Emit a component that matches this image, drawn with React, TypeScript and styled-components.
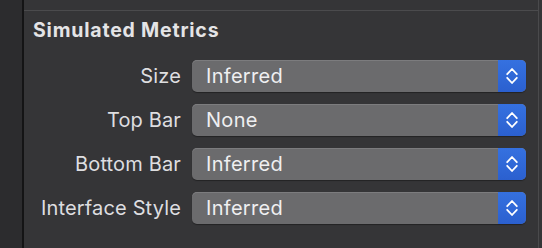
import React from 'react';
import styled, { createGlobalStyle } from 'styled-components';

const Global = createGlobalStyle`
  html, body {
    margin: 0;
    background: #353537;
  }
  body {
    font-family: Inter, "Liberation Sans", sans-serif;
    -webkit-font-smoothing: antialiased;
  }
`;

const Window = styled.div`
  display: flex;
  width: 542px;
  height: 248px;
  overflow: hidden;
`;

const Sidebar = styled.div`
  width: 22px;
  background: #2c2c2e;
  border-right: 2px solid #141415;
`;

const Inspector = styled.div`
  width: 514px;
  border-right: 1px solid #4a4a4c;
  display: flex;
  flex-direction: column;
`;

const TopStrip = styled.div`
  height: 10px;
  border-bottom: 1px solid #4b4b4d;
`;

const Title = styled.h3`
  margin: 7px 0 0 9px;
  font-size: 19.5px;
  line-height: 24px;
  font-weight: 700;
  letter-spacing: 0.8px;
  color: #e4e4e6;
`;

const Form = styled.div`
  display: grid;
  grid-template-columns: 157px 334px;
  column-gap: 11px;
  row-gap: 12px;
  margin-top: 18px;
  align-items: center;
`;

const Label = styled.span`
  text-align: right;
  font-size: 20px;
  letter-spacing: 0.15px;
  color: #dedee0;
`;

const Popup = styled.div`
  display: flex;
  height: 32px;
  border-radius: 5px;
  overflow: hidden;
  background: #6b6b6d;
  box-shadow: inset 0 1px 0 #7c7c7e, 0 1px 1px rgba(0, 0, 0, 0.35);
`;

const Value = styled.span`
  flex: 1;
  padding-left: 14px;
  font-size: 20px;
  letter-spacing: 0.3px;
  line-height: 32px;
  color: #efeff1;
`;

const Stepper = styled.div`
  width: 28px;
  display: flex;
  align-items: center;
  justify-content: center;
  background: linear-gradient(#3571e0, #2b60cf);
`;

const rows = [
  { label: 'Size', value: 'Inferred' },
  { label: 'Top Bar', value: 'None' },
  { label: 'Bottom Bar', value: 'Inferred' },
  { label: 'Interface Style', value: 'Inferred' },
];

const Chevrons = () => (
  <svg width="28" height="32" viewBox="0 0 28 32">
    <path
      d="M9.2 14.2 L14 9 L18.8 14.2 M9.2 17.8 L14 23 L18.8 17.8"
      fill="none"
      stroke="#ffffff"
      strokeWidth="1.8"
      strokeLinecap="round"
      strokeLinejoin="round"
    />
  </svg>
);

export default function App() {
  return (
    <Window>
      <Global />
      <Sidebar />
      <Inspector>
        <TopStrip />
        <Title>Simulated Metrics</Title>
        <Form>
          {rows.map((r) => (
            <React.Fragment key={r.label}>
              <Label>{r.label}</Label>
              <Popup>
                <Value>{r.value}</Value>
                <Stepper>
                  <Chevrons />
                </Stepper>
              </Popup>
            </React.Fragment>
          ))}
        </Form>
      </Inspector>
    </Window>
  );
}
